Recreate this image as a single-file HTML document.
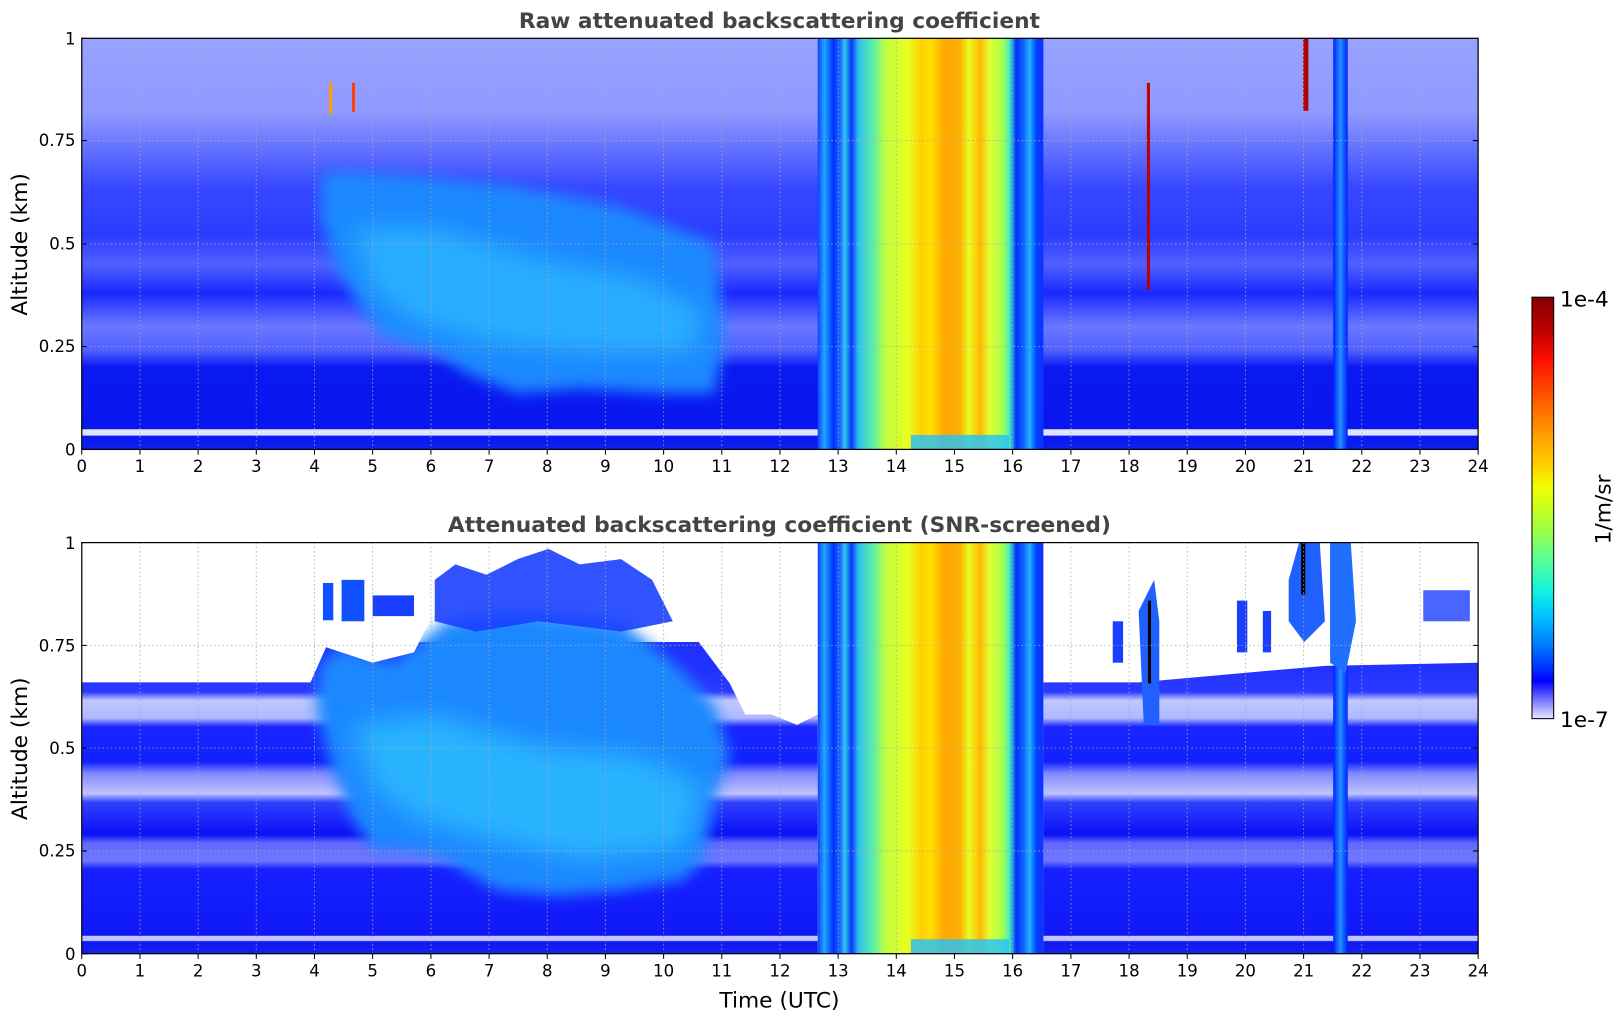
<!DOCTYPE html>
<html><head><meta charset="utf-8"><style>
html,body{margin:0;padding:0;background:#fff;width:1621px;height:1020px;overflow:hidden}
#w{position:absolute;left:0;top:0;width:1566px;height:985px;transform:scale(1.0351,1.0355);transform-origin:0 0}
text{font-family:"DejaVu Sans","Liberation Sans",sans-serif;fill:#000}
</style></head><body><div id="w">
<svg width="1566" height="985" viewBox="0 0 1566 985" xmlns="http://www.w3.org/2000/svg">
<defs>
<linearGradient id="band" gradientUnits="userSpaceOnUse" x1="790" y1="0" x2="1008" y2="0">
<stop offset="0" stop-color="#1040ff"/><stop offset="0.03" stop-color="#20a8ff"/><stop offset="0.07" stop-color="#0030ff"/>
<stop offset="0.1" stop-color="#1868ff"/><stop offset="0.12" stop-color="#30c8f0"/><stop offset="0.15" stop-color="#0838ff"/>
<stop offset="0.18" stop-color="#30c0f0"/><stop offset="0.25" stop-color="#60f0a0"/><stop offset="0.3" stop-color="#c0ff40"/>
<stop offset="0.4" stop-color="#e8ff20"/><stop offset="0.46" stop-color="#ffd000"/><stop offset="0.5" stop-color="#ffe000"/>
<stop offset="0.56" stop-color="#ffa800"/><stop offset="0.63" stop-color="#ffb000"/><stop offset="0.67" stop-color="#e8ff20"/>
<stop offset="0.72" stop-color="#ffb800"/><stop offset="0.76" stop-color="#e0ff30"/><stop offset="0.82" stop-color="#a8ff50"/>
<stop offset="0.85" stop-color="#40f0c0"/><stop offset="0.88" stop-color="#0030ff"/><stop offset="0.91" stop-color="#1060ff"/>
<stop offset="0.94" stop-color="#20b0ff"/><stop offset="0.97" stop-color="#0040ff"/><stop offset="1" stop-color="#1030ff"/>
</linearGradient>
<linearGradient id="v1" gradientUnits="userSpaceOnUse" x1="0" y1="37" x2="0" y2="434">
<stop offset="0" stop-color="#98a2ff"/><stop offset="0.18" stop-color="#9099ff"/><stop offset="0.26" stop-color="#6676ff"/>
<stop offset="0.36" stop-color="#3848ff"/><stop offset="0.48" stop-color="#2c3cff"/><stop offset="0.55" stop-color="#5060ff"/>
<stop offset="0.62" stop-color="#1a28ff"/><stop offset="0.7" stop-color="#6a78ff"/><stop offset="0.76" stop-color="#5060ff"/>
<stop offset="0.8" stop-color="#0a18f2"/><stop offset="0.95" stop-color="#0a16ee"/><stop offset="0.952" stop-color="#e0e4ff"/>
<stop offset="0.965" stop-color="#e0e4ff"/><stop offset="0.968" stop-color="#0818f0"/><stop offset="1" stop-color="#1020f0"/>
</linearGradient>
<linearGradient id="v2" gradientUnits="userSpaceOnUse" x1="0" y1="640" x2="0" y2="921">
<stop offset="0" stop-color="#2030ff"/><stop offset="0.1" stop-color="#2a3aff"/><stop offset="0.13" stop-color="#c0c8ff"/>
<stop offset="0.19" stop-color="#b0b8ff"/><stop offset="0.22" stop-color="#1a26ff"/><stop offset="0.34" stop-color="#1020ff"/>
<stop offset="0.38" stop-color="#8088ff"/><stop offset="0.45" stop-color="#c0c4ff"/><stop offset="0.48" stop-color="#3040ff"/>
<stop offset="0.59" stop-color="#0a10f5"/><stop offset="0.62" stop-color="#6068ff"/><stop offset="0.68" stop-color="#7078ff"/>
<stop offset="0.71" stop-color="#1620ff"/><stop offset="0.937" stop-color="#1018f8"/><stop offset="0.94" stop-color="#c0c4ff"/>
<stop offset="0.955" stop-color="#c0c4ff"/><stop offset="0.958" stop-color="#1018f0"/><stop offset="1" stop-color="#1420f0"/>
</linearGradient>
<linearGradient id="cb" x1="0" y1="0" x2="0" y2="1">
<stop offset="0" stop-color="#800000"/><stop offset="0.08" stop-color="#c00000"/><stop offset="0.15" stop-color="#ff1000"/>
<stop offset="0.25" stop-color="#ff6000"/><stop offset="0.33" stop-color="#ffa000"/><stop offset="0.4" stop-color="#ffd000"/>
<stop offset="0.45" stop-color="#f0ff00"/><stop offset="0.55" stop-color="#a0ff40"/><stop offset="0.63" stop-color="#50ffa0"/>
<stop offset="0.7" stop-color="#10f0e0"/><stop offset="0.75" stop-color="#00c8ff"/><stop offset="0.82" stop-color="#0080ff"/>
<stop offset="0.88" stop-color="#0030ff"/><stop offset="0.91" stop-color="#0000ff"/><stop offset="0.93" stop-color="#3030ff"/>
<stop offset="0.96" stop-color="#8080ff"/><stop offset="1" stop-color="#e8e8ff"/>
</linearGradient>
<linearGradient id="str" x1="0" y1="0" x2="1" y2="0">
<stop offset="0" stop-color="#0020ff"/><stop offset="0.5" stop-color="#2090ff"/><stop offset="1" stop-color="#0020ff"/>
</linearGradient>
<filter id="bl" x="-20%" y="-20%" width="140%" height="140%"><feGaussianBlur stdDeviation="7"/></filter>
<filter id="bl2" x="-20%" y="-20%" width="140%" height="140%"><feGaussianBlur stdDeviation="12"/></filter>
<clipPath id="c1"><rect x="79" y="37" width="1349" height="397"/></clipPath>
<clipPath id="c2"><polygon points="79,659 300,659 315,625 360,640 400,630 420,590 430,560 480,570 520,545 560,560 600,550 630,560 660,600 690,640 705,660 720,690 745,690 770,700 790,690 790,921 79,921"/>
<polygon points="1008,659 1100,659 1200,650 1280,643 1428,640 1428,921 1008,921"/></clipPath>
</defs>

<g clip-path="url(#c1)">
<rect x="79" y="37" width="1349" height="397" fill="url(#v1)"/>
<polygon points="310,170 330,165 400,170 500,180 600,200 690,235 700,330 690,380 640,380 560,375 500,380 450,360 420,340 370,325 350,300 325,260 310,210" fill="#1a88ff" filter="url(#bl)"/>
<polygon points="340,220 420,220 520,250 620,270 680,300 670,340 560,340 470,330 400,310 360,280" fill="#30c8ff" opacity="0.6" filter="url(#bl2)"/>
<rect x="1288" y="37" width="14" height="397" fill="url(#str)"/>
<rect x="790" y="37" width="218" height="397" fill="url(#band)"/>
<rect x="880" y="420" width="95" height="14" fill="#20c0ff" opacity="0.8"/>
<rect x="1108" y="80" width="3" height="200" fill="#c00000"/>
<rect x="1259" y="37" width="5" height="70" fill="#b00000"/>
<rect x="340" y="80" width="3" height="28" fill="#ff4000"/>
<rect x="318" y="80" width="3" height="30" fill="#ffa000"/>
</g>
<g stroke="#aaa" stroke-width="1" stroke-dasharray="1.5,2.5" fill="none" opacity="0.8">
<path d="M135.2 37V434M191.4 37V434M247.6 37V434M303.8 37V434M360 37V434M416.3 37V434M472.5 37V434M528.7 37V434M584.9 37V434M641.1 37V434M697.3 37V434M753.5 37V434M809.7 37V434M865.9 37V434M922.1 37V434M978.3 37V434M1034.6 37V434M1090.8 37V434M1147 37V434M1203.2 37V434M1259.4 37V434M1315.6 37V434M1371.8 37V434"/>
<path d="M79 135.75H1428M79 235.5H1428M79 334.75H1428"/>
</g>
<rect x="79" y="37" width="1349" height="397" fill="none" stroke="#000" stroke-width="1.2"/>

<g clip-path="url(#c2)">
<rect x="79" y="620" width="1349" height="301" fill="url(#v2)"/>
<polygon points="310,640 330,625 380,640 430,600 500,590 600,600 650,640 690,680 705,730 690,770 680,830 660,850 600,860 540,865 480,860 430,830 400,822 360,820 340,790 320,740 305,680" fill="#1a88ff" filter="url(#bl)"/>
<polygon points="340,700 420,690 520,720 620,730 680,760 660,820 560,830 470,810 400,790 360,760" fill="#30d0ff" opacity="0.6" filter="url(#bl2)"/>
<rect x="1288" y="620" width="14" height="301" fill="url(#str)"/>
</g>
<g fill="#1a40ff">
<polygon points="420,560 440,545 470,555 500,540 530,530 560,545 600,540 630,560 650,600 600,610 520,600 460,610 420,600" opacity="0.9"/>
<rect x="312" y="563" width="10" height="36" fill="#1050ff"/>
<rect x="330" y="560" width="22" height="40" fill="#1050ff"/>
<rect x="360" y="575" width="40" height="20"/>
<polygon points="1100,590 1115,560 1120,600 1120,700 1105,700" fill="#2060ff"/>
<polygon points="1245,560 1255,524 1275,524 1280,600 1260,620 1245,600" fill="#2060ff"/>
<polygon points="1285,524 1305,524 1310,600 1300,650 1285,640" fill="#2070ff"/>
<rect x="1375" y="570" width="45" height="30" opacity="0.8"/>
<rect x="1075" y="600" width="10" height="40"/>
<rect x="1195" y="580" width="10" height="50"/>
<rect x="1220" y="590" width="8" height="40"/>
</g>
<rect x="1257" y="524" width="4" height="50" fill="#000"/>
<rect x="1109" y="580" width="3" height="80" fill="#000"/>
<rect x="790" y="524" width="218" height="397" fill="url(#band)"/>
<rect x="880" y="907" width="95" height="14" fill="#20c0ff" opacity="0.8"/>
<g stroke="#aaa" stroke-width="1" stroke-dasharray="1.5,2.5" fill="none" opacity="0.8">
<path d="M135.2 524V921M191.4 524V921M247.6 524V921M303.8 524V921M360 524V921M416.3 524V921M472.5 524V921M528.7 524V921M584.9 524V921M641.1 524V921M697.3 524V921M753.5 524V921M809.7 524V921M865.9 524V921M922.1 524V921M978.3 524V921M1034.6 524V921M1090.8 524V921M1147 524V921M1203.2 524V921M1259.4 524V921M1315.6 524V921M1371.8 524V921"/>
<path d="M79 623.25H1428M79 722.5H1428M79 821.75H1428"/>
</g>
<rect x="79" y="524" width="1349" height="397" fill="none" stroke="#000" stroke-width="1.2"/>

<g stroke="#000" stroke-width="1">
<path d="M79 434v5M135.2 434v5M191.4 434v5M247.6 434v5M303.8 434v5M360 434v5M416.3 434v5M472.5 434v5M528.7 434v5M584.9 434v5M641.1 434v5M697.3 434v5M753.5 434v5M809.7 434v5M865.9 434v5M922.1 434v5M978.3 434v5M1034.6 434v5M1090.8 434v5M1147 434v5M1203.2 434v5M1259.4 434v5M1315.6 434v5M1371.8 434v5M1428 434v5"/>
<path d="M79 921v5M135.2 921v5M191.4 921v5M247.6 921v5M303.8 921v5M360 921v5M416.3 921v5M472.5 921v5M528.7 921v5M584.9 921v5M641.1 921v5M697.3 921v5M753.5 921v5M809.7 921v5M865.9 921v5M922.1 921v5M978.3 921v5M1034.6 921v5M1090.8 921v5M1147 921v5M1203.2 921v5M1259.4 921v5M1315.6 921v5M1371.8 921v5M1428 921v5"/>
<path d="M79 37h5M79 135.75h5M79 235.5h5M79 334.75h5M79 434h5M1428 135.75h-5M1428 235.5h-5M1428 334.75h-5"/>
<path d="M79 524h5M79 623.25h5M79 722.5h5M79 821.75h5M79 921h5M1428 623.25h-5M1428 722.5h-5M1428 821.75h-5"/>
</g>

<g font-size="16" text-anchor="middle">
<text x="79" y="456">0</text><text x="135.2" y="456">1</text><text x="191.4" y="456">2</text><text x="247.6" y="456">3</text><text x="303.8" y="456">4</text><text x="360" y="456">5</text><text x="416.3" y="456">6</text><text x="472.5" y="456">7</text><text x="528.7" y="456">8</text><text x="584.9" y="456">9</text><text x="641.1" y="456">10</text><text x="697.3" y="456">11</text><text x="753.5" y="456">12</text><text x="809.7" y="456">13</text><text x="865.9" y="456">14</text><text x="922.1" y="456">15</text><text x="978.3" y="456">16</text><text x="1034.6" y="456">17</text><text x="1090.8" y="456">18</text><text x="1147" y="456">19</text><text x="1203.2" y="456">20</text><text x="1259.4" y="456">21</text><text x="1315.6" y="456">22</text><text x="1371.8" y="456">23</text><text x="1428" y="456">24</text>
<text x="79" y="943">0</text><text x="135.2" y="943">1</text><text x="191.4" y="943">2</text><text x="247.6" y="943">3</text><text x="303.8" y="943">4</text><text x="360" y="943">5</text><text x="416.3" y="943">6</text><text x="472.5" y="943">7</text><text x="528.7" y="943">8</text><text x="584.9" y="943">9</text><text x="641.1" y="943">10</text><text x="697.3" y="943">11</text><text x="753.5" y="943">12</text><text x="809.7" y="943">13</text><text x="865.9" y="943">14</text><text x="922.1" y="943">15</text><text x="978.3" y="943">16</text><text x="1034.6" y="943">17</text><text x="1090.8" y="943">18</text><text x="1147" y="943">19</text><text x="1203.2" y="943">20</text><text x="1259.4" y="943">21</text><text x="1315.6" y="943">22</text><text x="1371.8" y="943">23</text><text x="1428" y="943">24</text>
</g>
<g font-size="16" text-anchor="end">
<text x="73" y="43">1</text><text x="73" y="141">0.75</text><text x="73" y="241">0.5</text><text x="73" y="340">0.25</text><text x="73" y="440">0</text>
<text x="73" y="530">1</text><text x="73" y="629">0.75</text><text x="73" y="728">0.5</text><text x="73" y="827">0.25</text><text x="73" y="927">0</text>
</g>
<g font-size="21" font-weight="bold" text-anchor="middle">
<text x="753" y="27" style="fill:#444">Raw attenuated backscattering coefficient</text>
<text x="753" y="514" style="fill:#444">Attenuated backscattering coefficient (SNR-screened)</text>
</g>
<text x="0" y="0" font-size="21" text-anchor="middle" transform="translate(26,236) rotate(-90)">Altitude (km)</text>
<text x="0" y="0" font-size="21" text-anchor="middle" transform="translate(26,723) rotate(-90)">Altitude (km)</text>
<text x="753" y="973" font-size="21" text-anchor="middle">Time (UTC)</text>

<rect x="1480" y="287" width="21" height="407" fill="url(#cb)" stroke="#000" stroke-width="1"/>
<text x="1507" y="296" font-size="21">1e-4</text>
<text x="1507" y="702" font-size="21">1e-7</text>
<text x="0" y="0" font-size="21" text-anchor="middle" transform="translate(1556,492) rotate(-90)">1/m/sr</text>
</svg>
</div></body></html>
